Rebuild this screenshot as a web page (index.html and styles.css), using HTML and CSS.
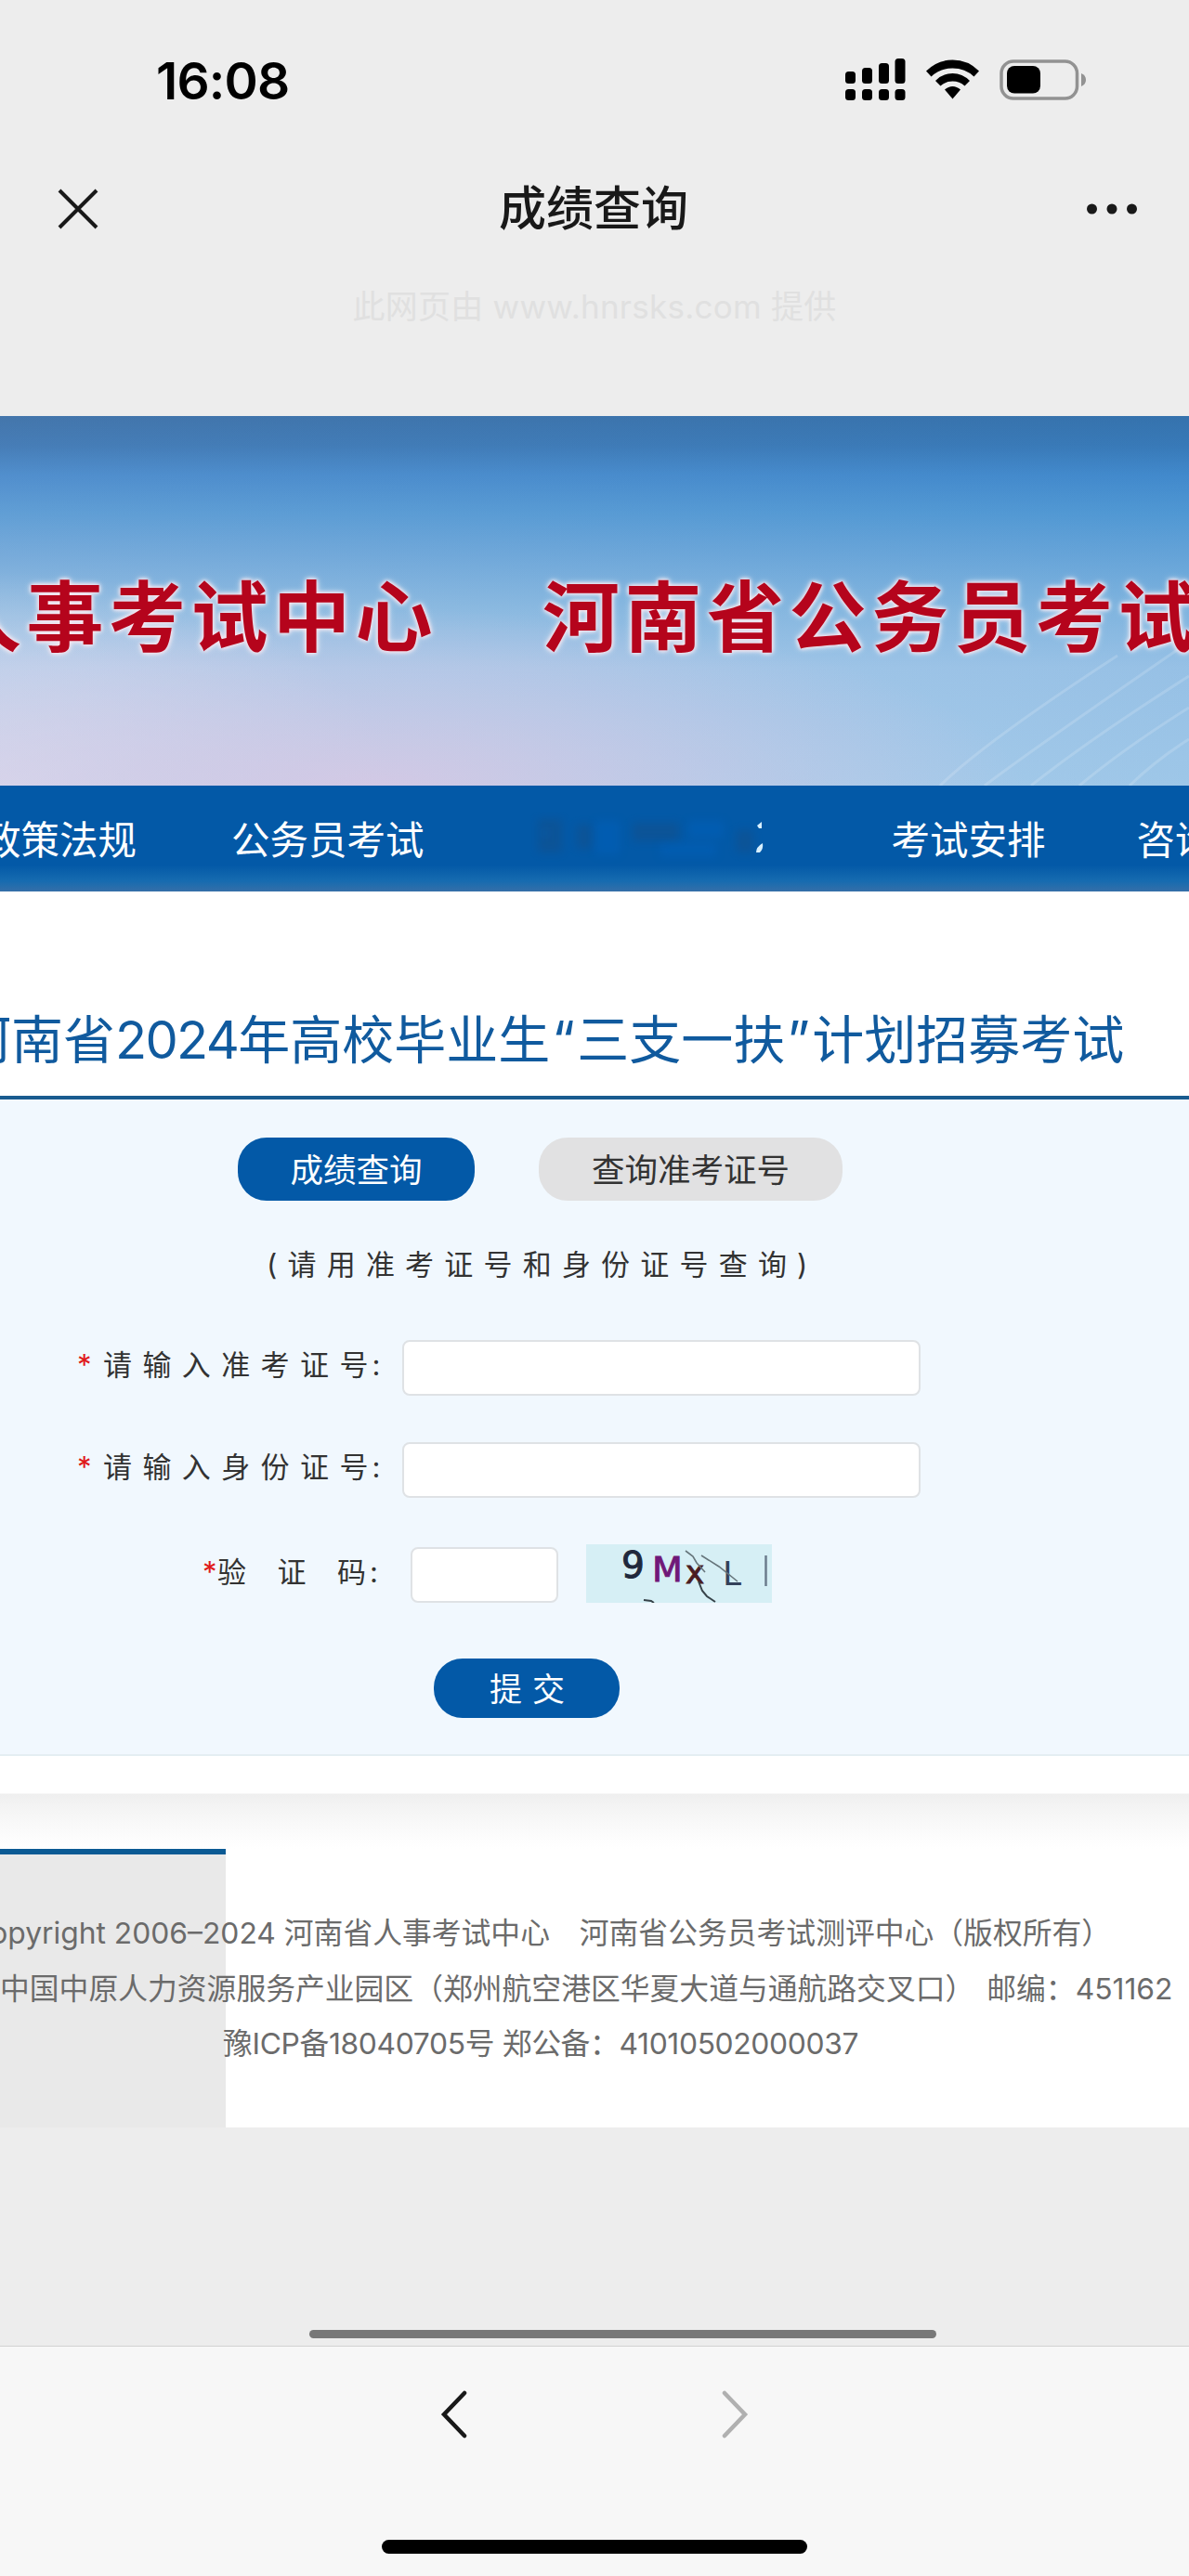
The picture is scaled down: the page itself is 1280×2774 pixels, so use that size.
FILE: index.html
```
<!DOCTYPE html>
<html lang="zh-CN">
  <head>
    <meta charset="UTF-8" />
    <meta name="viewport" content="width=device-width, initial-scale=1.0" />
    <title>成绩查询</title>
    <link rel="stylesheet" href="styles.css">
  </head>
  <body>
    <div class="status-bar">
      <span class="time">16:08</span>
      <svg class="status-icons" width="260" height="46" viewBox="0 0 260 46">
        <g>
          <rect x="1" y="15" width="11" height="13" rx="3.5" />
          <rect x="19" y="11" width="11" height="17" rx="3.5" />
          <rect x="37" y="6" width="11" height="22" rx="3.5" />
          <rect x="54.5" y="1" width="11" height="27" rx="3.5" />
          <rect x="1" y="34" width="11" height="12" rx="3.5" />
          <rect x="19" y="34" width="11" height="12" rx="3.5" />
          <rect x="37" y="34" width="11" height="12" rx="3.5" />
          <rect x="54.5" y="34" width="11" height="12" rx="3.5" />
        </g>
        <path d="M88 14.5Q100 2.5 116.5 2.5T145 14.5L139.5 20.5Q130 11.5 116.5 11.5T93.5 20.5Z" />
        <path d="M98 25Q106 17 116.5 17T135 25L129.5 30.5Q124 25.5 116.5 25.5T103.5 30.5Z" />
        <path d="M108 34.5Q112 31 116.5 31T125 34.5L116.5 44.5Z" />
        <rect x="169" y="4" width="81.5" height="40" rx="13" fill="none" stroke="#929292" stroke-width="3.5" />
        <rect x="175" y="9" width="36" height="29.5" rx="8" />
        <path d="M255 17Q260 19 260 24T255 31Z" fill="#929292" />
      </svg>
    </div>

    <div class="title-bar">
      <svg class="close" width="44" height="44" viewBox="0 0 44 44">
        <path d="M2 2L42 42M42 2L2 42" fill="none" stroke="#191919" stroke-width="4" />
      </svg>
      <h1>成绩查询</h1>
      <svg class="more" width="56" height="12" viewBox="0 0 56 12">
        <circle cx="6.5" cy="6" r="5.5" />
        <circle cx="28" cy="6" r="5.5" />
        <circle cx="49.5" cy="6" r="5.5" />
      </svg>
    </div>
    <p class="provider">此网页由 www.hnrsks.com 提供</p>

    <div class="banner">
      <svg class="banner-lines" width="300" height="230" viewBox="0 0 300 230">
        <path d="M32 230Q80 183 223 90M80 230Q130 192 290 82M130 230Q190 182 300 112M182 230Q230 190 300 146M236 230Q265 202 300 180" />
      </svg>
      <div class="banner-text">
        <span>人事考试中心</span>
        <span>河南省公务员考试</span>
      </div>
    </div>

    <div class="nav">
      <a>政策法规</a>
      <a>公务员考试</a>
      <svg class="smudge" width="262" height="56" viewBox="0 0 262 56">
        <g class="smudge-dark">
          <path d="M8 8H34V44H8ZM50 14H66V40H50ZM110 12H160V32H110ZM222 20H240V44H222Z" />
        </g>
        <g class="smudge-light">
          <path d="M70 10H96V46H70ZM140 34H200V48H140ZM170 10H208V28H170ZM12 20H20V26H12Z" />
        </g>
        <path class="smudge-tail" d="M244 15L249 11V18L246 18ZM243 44Q243 38 250 34Q251 40 247 44Z" />
      </svg>
      <a>考试安排</a>
      <a>咨询</a>
    </div>

    <div class="exam-title">河南省<span class="num">2024</span>年高校毕业生<span class="quote">“</span>三支一扶<span class="quote">”</span>计划招募考试</div>

    <div class="panel">
      <div class="tabs">
        <button class="tab active">成绩查询</button>
        <button class="tab">查询准考证号</button>
      </div>
      <p class="hint">(请用准考证号和身份证号查询)</p>

      <form>
        <div class="form-group">
          <label for="ticket"><i>*</i>请输入准考证<b>号:</b></label>
          <input type="text" id="ticket" />
        </div>
        <div class="form-group">
          <label for="idcard"><i>*</i>请输入身份证<b>号:</b></label>
          <input type="text" id="idcard" />
        </div>
        <div class="form-group code-group">
          <label for="code"><i>*</i>验证<b>码:</b></label>
          <input type="text" id="code" />
          <svg class="captcha" width="200" height="63" viewBox="0 0 200 63">
            <rect width="200" height="63" fill="#d6eff5" />
            <text x="38" y="36" font-size="39" fill="#20283c" stroke="#20283c">9</text>
            <text x="71" y="40" font-size="38" fill="#701878" stroke="#701878">M</text>
            <text x="107" y="42" font-size="34" fill="#4a1c22" stroke="#4a1c22">x</text>
            <text x="147" y="44" font-size="36" fill="#33415a">L</text>
            <path d="M193.5 12V45" stroke="#6b7c8c" stroke-width="2.5" />
            <path d="M107 7L115 13L119 20L128 30M124 12L143 24L163 40" fill="none" stroke="#66757b" stroke-width="1.6" />
            <path d="M121 40L125 50L130 56L139 62M62 60L70 61L73 63" fill="none" stroke="#37434a" stroke-width="2" />
          </svg>
        </div>
        <button type="button" class="submit">提交</button>
      </form>
    </div>

    <div class="shade"></div>

    <div class="footer">
      <p class="line1">Copyright 2006–2024 河南省人事考试中心　河南省公务员考试测评中心（版权所有）</p>
      <p class="line2">中国中原人力资源服务产业园区（郑州航空港区华夏大道与通航路交叉口） 邮编：451162</p>
      <p class="line3">豫ICP备18040705号 郑公备：41010502000037</p>
    </div>

    <div class="page-end">
      <div class="scrollbar"></div>
    </div>

    <div class="toolbar">
      <div class="arrows">
        <svg width="30" height="52" viewBox="0 0 30 52">
          <path d="M26 3L4 26L26 49" stroke="#191919" />
        </svg>
        <svg width="30" height="52" viewBox="0 0 30 52">
          <path d="M4 3L26 26L4 49" stroke="#b0b0b0" />
        </svg>
      </div>
      <div class="home-indicator"></div>
    </div>
  </body>
</html>
```
FILE: styles.css
```
* {
  box-sizing: border-box;
}
body {
  margin: 0;
  width: 1280px;
  height: 2774px;
  overflow: hidden;
  background: #ededed;
  font-family: Inter, "Noto Sans CJK SC", sans-serif;
  color: #333;
}
p,
h1 {
  margin: 0;
}
button {
  border: none;
  font-family: inherit;
}

/* phone header */
.status-bar {
  height: 150px;
  padding: 62px 111px 0 168px;
  display: flex;
  justify-content: space-between;
}
.time {
  font-size: 55px;
  line-height: 50px;
  font-weight: 600;
  letter-spacing: -0.8px;
  color: #000;
}
.title-bar {
  height: 150px;
  padding: 0 55px 0 62px;
  display: flex;
  align-items: center;
  justify-content: space-between;
}
.title-bar h1 {
  margin-left: 3px;
  font-size: 51px;
  line-height: 60px;
  font-weight: 500;
  color: #191919;
}
.more {
  fill: #191919;
}
.provider {
  height: 148px;
  padding-top: 8px;
  text-align: center;
  font-size: 35px;
  line-height: 44px;
  letter-spacing: 0.25px;
  color: #e0e0e0;
}

/* site banner */
.banner {
  position: relative;
  height: 398px;
  overflow: hidden;
  padding-top: 154px;
  background:
    radial-gradient(ellipse 700px 190px at 400px 398px, rgba(214, 200, 228, 0.9), rgba(214, 200, 228, 0)),
    radial-gradient(ellipse 420px 230px at 0 398px, rgba(222, 220, 238, 0.8), rgba(222, 220, 238, 0)),
    linear-gradient(90deg, rgba(255, 255, 255, 0.04), rgba(0, 130, 210, 0.12)),
    linear-gradient(#3c70a8, #3f78b4 8%, #4a8acb 16%, #5a9ad3 26%, #73a8d9 38%, #8fbae0 52%, #abc9e8 68%, #b3d0eb 100%);
}
.banner-lines {
  position: absolute;
  right: 0;
  bottom: 0;
  fill: none;
  stroke: rgba(255, 255, 255, 0.16);
  stroke-width: 3;
}
.banner-text {
  position: relative;
  display: flex;
  gap: 113px;
  margin-left: -60px;
  font-size: 83px;
  line-height: 126px;
  font-weight: 700;
  letter-spacing: 5.5px;
  white-space: nowrap;
  color: #b5041c;
  text-shadow: 0 0 4px #fbe6ee, 0 0 5px #fbe6ee, 0 0 9px rgba(255, 255, 255, 0.7);
}

.nav {
  height: 114px;
  display: flex;
  align-items: center;
  padding-bottom: 2px;
  overflow: hidden;
  background: linear-gradient(#0359a7 75%, #166bb0 90%, #356fa8);
  font-size: 41.5px;
  color: #fff;
  white-space: nowrap;
}
.nav a {
  flex: none;
  margin-right: 102px;
}
.nav a:first-child {
  margin-left: -19px;
}
.nav a:nth-of-type(3) {
  margin-right: 98px;
}
.smudge {
  flex: none;
  margin: 0 127px 0 12px;
}
.smudge-dark {
  fill: #1a4c80;
  opacity: 0.4;
  filter: blur(5px);
}
.smudge-light {
  fill: #0062c0;
  opacity: 0.4;
  filter: blur(5px);
}
.smudge-tail {
  fill: #d8f0ff;
}

/* query form */
.exam-title {
  height: 220px;
  margin-left: -44px;
  padding-top: 122px;
  background: #fff;
  font-size: 56px;
  line-height: 76px;
  white-space: nowrap;
  color: #105a9e;
}
.num {
  letter-spacing: -1.7px;
}
.quote {
  display: inline-block;
  width: 29px;
  text-align: center;
}
.panel {
  height: 711px;
  padding-top: 41px;
  border-top: 4px solid #195b8f;
  border-bottom: 2px solid #e4eef2;
  background: #f1f8fe;
}
.tabs {
  display: flex;
  gap: 69px;
  padding-left: 256px;
}
.tab {
  width: 255px;
  height: 68px;
  border-radius: 31px;
  background: #e1e1e2;
  font-size: 35.5px;
  color: #333;
  padding: 0 0 4px;
}
.tab:last-child {
  width: 327px;
}
.tab.active {
  background: #0359a7;
  color: #fff;
}
.hint {
  padding: 46px 0 0 287px;
  font-size: 31px;
  line-height: 46px;
  letter-spacing: 11.2px;
}
form {
  padding-top: 58px;
}
.form-group {
  display: flex;
  height: 110px;
}
label {
  display: flex;
  width: 433px;
  padding-left: 83px;
  font-size: 31px;
  line-height: 54px;
  letter-spacing: 11.4px;
  white-space: nowrap;
}
label i {
  width: 28px;
  font-style: normal;
  color: #e01a1a;
}
label b {
  font-weight: 400;
  letter-spacing: 4px;
}
input {
  width: 558px;
  height: 60px;
  border: 2px solid #dfe2e5;
  border-radius: 8px;
  background: #fff;
}
.code-group {
  height: 123px;
}
.code-group label {
  width: 442px;
  padding: 3px 0 0 218px;
  letter-spacing: 33.5px;
}
.code-group label i {
  width: 16px;
  letter-spacing: 0;
}
.code-group label b {
  letter-spacing: 4px;
}
.code-group input {
  width: 159px;
  margin-top: 3px;
}
.captcha {
  margin-left: 30px;
  font-family: "DejaVu Sans", sans-serif;
}
.submit {
  display: block;
  width: 200px;
  height: 64px;
  margin-left: 467px;
  padding: 0 0 4px 12px;
  border-radius: 31px;
  background: #0359a7;
  font-size: 35px;
  letter-spacing: 11px;
  color: #fff;
}

/* footer */
.shade {
  height: 100px;
  background: linear-gradient(#fff 40px, #efefef 41px, #f6f6f6 62px, #fdfdfd 90px, #fff);
}
.footer {
  height: 300px;
  padding-top: 61px;
  background: linear-gradient(90deg, #e9e9e9 243px, #fff 243px);
  position: relative;
  overflow: hidden;
  white-space: nowrap;
  font-size: 31.8px;
  line-height: 59.5px;
  color: #6b6b6b;
}
.footer::before {
  content: "";
  position: absolute;
  top: 0;
  left: 0;
  width: 243px;
  height: 6px;
  background: #0b5a94;
}
.line1 {
  margin-left: -34px;
}
.line2 {
  word-spacing: 4px;
}
.line3 {
  margin-left: 240px;
  letter-spacing: -0.35px;
}

.page-end {
  height: 235px;
  padding-top: 218px;
}
.scrollbar {
  width: 675px;
  height: 9px;
  margin-left: 333px;
  border-radius: 5px;
  background: #787878;
}
.toolbar {
  height: 248px;
  padding-top: 47px;
  border-top: 1px solid #d2d2d2;
  background: #f7f7f7;
}
.arrows {
  display: flex;
  gap: 272px;
  padding-left: 474px;
}
.arrows path {
  fill: none;
  stroke-width: 4.5;
  stroke-linecap: round;
}
.home-indicator {
  width: 458px;
  height: 15px;
  margin: 109px auto 0;
  border-radius: 8px;
  background: #000;
}
```
